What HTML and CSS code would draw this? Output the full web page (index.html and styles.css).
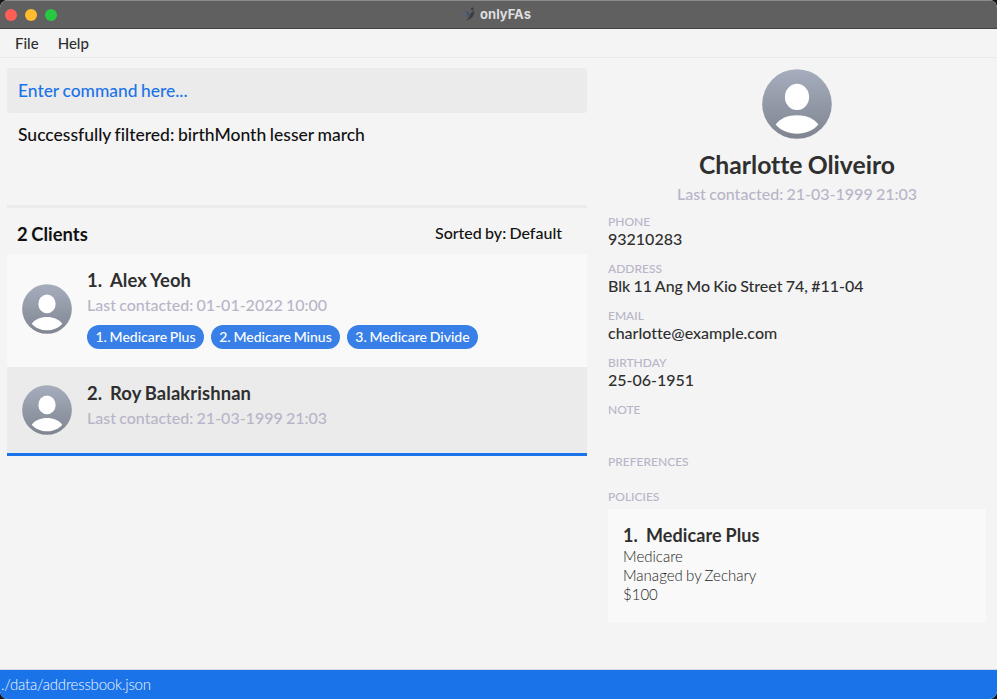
FILE: index.html
```html
<!DOCTYPE html>
<html lang="en">
<head>
<meta charset="utf-8">
<title>onlyFAs</title>
<link rel="stylesheet" href="styles.css">
</head>
<body>
<svg class="defs" aria-hidden="true">
  <defs>
    <linearGradient id="avatar-fill" x1="0" y1="0" x2="0" y2="1">
      <stop offset="0" stop-color="#a6adbd"/>
      <stop offset="1" stop-color="#7f8590"/>
    </linearGradient>
    <symbol id="avatar" viewBox="0 0 70 70">
      <circle cx="35" cy="35" r="34.8" fill="url(#avatar-fill)"/>
      <ellipse cx="35" cy="27.9" rx="12.1" ry="13.1" fill="#fff"/>
      <path d="M13.6 55.6C18 49.4 26 46.2 35 46.2s17 3.2 21.4 9.4C51.5 61.500 43.500 64.800 35 64.800S18.500 61.500 13.600 55.600z" fill="#fff"/>
    </symbol>
  </defs>
</svg>
<div class="window">
  <header class="titlebar">
    <div class="lights"><i class="light close"></i><i class="light minimize"></i><i class="light zoom"></i></div>
    <div class="title">
      <svg class="logo" viewBox="0 0 14 14"><circle cx="10.300" cy="2" r="1.400" fill="#3b3c40"/><path d="M12.200 3.500C12.500 8.800 9.600 12.600 3.800 13.400 6.500 11.900 7.200 10.200 7.500 8.400 8.300 5.800 10.300 5.400 12.200 3.500z" fill="#3b3d42"/><path d="M3.400 3.200C6 4 7.400 5.500 7.100 7.800 6.800 9.300 5.800 10.400 4.300 10.900 5.400 8.300 5 5.600 3.400 3.200z" fill="#48546f"/><circle cx="1.700" cy="7.500" r="1.100" fill="#4d6189"/><circle cx="3.200" cy="6.200" r=".8" fill="#4d6189"/></svg>
      <span>onlyFAs</span>
    </div>
  </header>
  <nav class="menu"><span>File</span><span>Help</span></nav>
  <main class="content">
    <section class="left">
      <div class="command">Enter command here...</div>
      <div class="result">Successfully filtered: birthMonth lesser march</div>
      <div class="list-head"><h2>2 Clients</h2><span class="sort">Sorted by: Default</span></div>
      <article class="client">
        <svg class="avatar"><use href="#avatar"/></svg>
        <div class="info">
          <h3><span class="index">1.</span>Alex Yeoh</h3>
          <p class="contacted">Last contacted: 01-01-2022 10:00</p>
          <div class="tags"><span class="tag t1">1. Medicare Plus</span><span class="tag t2">2. Medicare Minus</span><span class="tag t3">3. Medicare Divide</span></div>
        </div>
      </article>
      <article class="client selected">
        <svg class="avatar"><use href="#avatar"/></svg>
        <div class="info">
          <h3><span class="index">2.</span>Roy Balakrishnan</h3>
          <p class="contacted">Last contacted: 21-03-1999 21:03</p>
        </div>
      </article>
    </section>
    <aside class="details">
      <div class="profile">
        <svg class="avatar large"><use href="#avatar"/></svg>
        <h1>Charlotte Oliveiro</h1>
        <p class="contacted">Last contacted: 21-03-1999 21:03</p>
      </div>
      <dl>
        <dt>PHONE</dt><dd>93210283</dd>
        <dt>ADDRESS</dt><dd>Blk 11 Ang Mo Kio Street 74, #11-04</dd>
        <dt>EMAIL</dt><dd>charlotte@example.com</dd>
        <dt>BIRTHDAY</dt><dd>25-06-1951</dd>
        <dt>NOTE</dt><dd class="note"></dd>
        <dt>PREFERENCES</dt><dd class="prefs"></dd>
        <dt>POLICIES</dt>
      </dl>
      <article class="policy">
        <h3><span class="index">1.</span>Medicare Plus</h3>
        <p>Medicare</p>
        <p>Managed by Zechary</p>
        <p>$100</p>
      </article>
    </aside>
  </main>
  <footer class="status">./data/addressbook.json</footer>
</div>
</body>
</html>
```
FILE: styles.css
```css
* { box-sizing: border-box; }
body { margin: 0; background: #14161a; font-family: Lato, sans-serif; font-weight: 500; font-variant-ligatures: none; word-spacing: -0.8px; color: #2f2f2f; }
h1, h2, h3, p, dl, dd { margin: 0; }
.defs { position: absolute; width: 0; height: 0; }
.window { display: flex; flex-direction: column; width: 997px; height: 699px; overflow: hidden; border-radius: 8px; background: #f4f4f4; }

.titlebar { display: grid; grid-template-columns: 1fr auto 1fr; align-items: center; height: 29px; background: #606060; border-top: 1px solid #8b8d8c; border-bottom: 1px solid #444; }
.lights { display: flex; gap: 8px; padding-left: 5px; }
.light { width: 12px; height: 12px; border-radius: 50%; }
.close { background: #ff5f57; }
.minimize { background: #febc2e; }
.zoom { background: #28c840; }
.title { display: flex; align-items: center; gap: 4px; margin: -2px 4px 0 0; font: 700 13px/16px Inter, sans-serif; color: #dedede; }
.logo { width: 14px; height: 14px; }

.menu { display: flex; gap: 19px; height: 29px; padding-left: 15px; line-height: 29px; font-size: 15px; border-bottom: 1px solid #eaeaea; }

.content { display: flex; flex: 1; gap: 21px; padding: 10px 11px 0 7px; }
.left { width: 580px; }
.command { height: 45px; padding-left: 11px; line-height: 45px; font-size: 17.4px; color: #1a73e8; background: #ebebeb; border-radius: 3px; }
.result { height: 95px; padding: 12px 0 0 11px; line-height: 20px; font-size: 17.5px; color: #111; }
.list-head { display: flex; justify-content: space-between; height: 49px; margin-top: -3px; padding: 0 25px 0 10px; border-top: 3px solid #ebebeb; color: #111; }
.list-head h2 { font-size: 18.4px; line-height: 53px; }
.sort { font-size: 16px; line-height: 50px; }

.client { display: flex; gap: 15px; height: 113px; padding: 0 15px; background: #f9f9f9; }
.selected { height: 89px; background: #ebebeb; border-bottom: 3px solid #1a73e8; }
.avatar { flex: none; width: 50px; height: 50px; }
.client .avatar { margin-top: 30px; }
.selected .avatar { margin-top: 18px; }
.info { padding-top: 14px; }
h3 { font-size: 18px; line-height: 24px; letter-spacing: 0.1px; }
.info h3 { font-size: 18.400px; }
.index { display: inline-block; width: 23px; }
.contacted { font-size: 16px; line-height: 24px; color: #b8b5c8; }
.info .contacted { margin-top: 1px; }
.tags { display: flex; gap: 7px; margin-top: 8px; }
.tag { height: 24px; border-radius: 12px; background: #3880e8; color: #fff; font-size: 14px; line-height: 24px; text-align: center; white-space: nowrap; }
.t1 { width: 117px; }
.t2 { width: 129px; }
.t3 { width: 131px; }

.details { flex: 1; padding-top: 1px; }
.profile { display: flex; flex-direction: column; align-items: center; }
.large { width: 70px; height: 70px; }
h1 { margin-top: 11px; font-size: 24.700px; line-height: 30px; }
.profile .contacted { margin-top: 2px; }
dt { height: 16px; line-height: 16px; font-size: 12px; color: #b8b5c8; }
dl { margin-top: 8px; }
dd { height: 31px; line-height: 18px; font-size: 16px; }
.note { height: 36px; }
.prefs { height: 19px; }
.policy { height: 113px; margin-top: 4px; padding: 14px 15px; background: #f9f9f9; }
.policy p { font-size: 15px; line-height: 19px; font-weight: 300; color: #1c1c1c; }
.status { height: 30px; padding-left: 1px; border-top: 1px solid #d5dbe2; background: #1a73e8; color: #f2f7ff; font-size: 15px; line-height: 29px; font-weight: 300; letter-spacing: -0.2px; }
```
